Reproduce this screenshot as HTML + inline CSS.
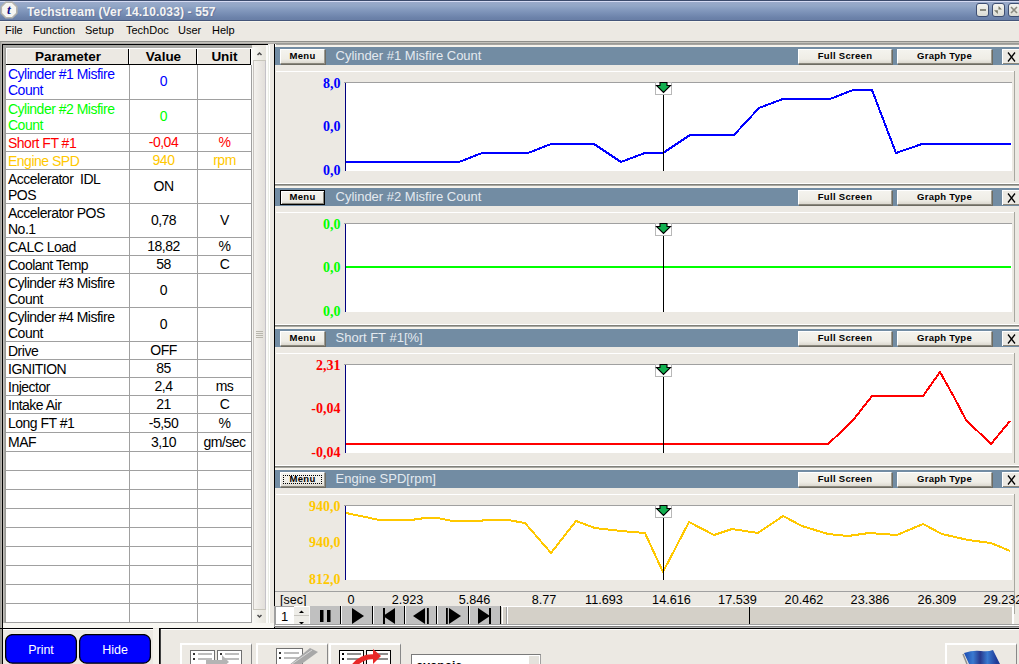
<!DOCTYPE html><html><head><meta charset="utf-8"><style>
html,body{margin:0;padding:0;}
body{width:1019px;height:664px;position:relative;overflow:hidden;background:#ECE9E3;font-family:"Liberation Sans",sans-serif;}
div{position:absolute;box-sizing:border-box;}
.t{white-space:pre;line-height:1;}
</style></head><body>
<div style="left:0;top:0;width:1019px;height:21px;background:linear-gradient(#3b4a6b 0px,#3b4a6b 1px,#d5dbf3 1px,#d5dbf3 2px,#9aaaca 2px,#92a6c6 6px,#8a9fc2 8px,#7a90b6 13px,#6b81a9 18px,#6a7fa6 20px,#44557a 20px,#44557a 21px)"></div>
<svg style="position:absolute;left:0;top:0" width="20" height="20" viewBox="0 0 20 20"><polygon points="5.8,2.3 12.2,2.3 16.8,6.8 16.8,13.2 12.2,17.7 5.8,17.7 1.3,13.2 1.3,6.8" fill="#f6f6f2" stroke="#b4b4ae" stroke-width="1.6"/><text x="9" y="14.3" font-family="Liberation Serif" font-style="italic" font-weight="bold" font-size="13.5" fill="#10108a" text-anchor="middle">t</text></svg>
<div class="t" style="left:27px;top:5.5px;font-weight:bold;font-size:12px;letter-spacing:0.15px;color:#f4f4f4;text-shadow:1px 1px 0 #6a7aa0;">Techstream (Ver 14.10.033) - 557</div>
<div style="left:976px;top:3px;width:13px;height:14px;background:linear-gradient(#f4f4f0,#dcdcd4);border:1px solid #3e4e72;border-radius:3px;"></div>
<div style="left:992px;top:3px;width:13px;height:14px;background:linear-gradient(#f4f4f0,#dcdcd4);border:1px solid #3e4e72;border-radius:3px;"></div>
<div style="left:1008px;top:3px;width:13px;height:14px;background:linear-gradient(#f4f4f0,#dcdcd4);border:1px solid #3e4e72;border-radius:3px;"></div>
<div style="left:980px;top:9px;width:6px;height:2px;background:#8a8a80;"></div>
<svg style="position:absolute;left:992px;top:3px" width="13" height="14"><polygon points="6.6,3 9.9,6.6 6.4,6.6" fill="#7a7a6a"/><polygon points="2,7.3 5.9,7.3 5.9,10.9" fill="#7a7a6a"/></svg>
<svg style="position:absolute;left:1008px;top:3px" width="11" height="14"><path d="M3,4 L9,10 M9,4 L3,10" stroke="#8a8a80" stroke-width="1.6"/></svg>
<div style="left:0px;top:21px;width:1019px;height:1px;background:#f8f6ee;"></div>
<div class="t" style="left:5px;top:25px;font-size:11px;color:#000;">File</div>
<div class="t" style="left:33px;top:25px;font-size:11px;color:#000;">Function</div>
<div class="t" style="left:85px;top:25px;font-size:11px;color:#000;">Setup</div>
<div class="t" style="left:126px;top:25px;font-size:11px;color:#000;">TechDoc</div>
<div class="t" style="left:178px;top:25px;font-size:11px;color:#000;">User</div>
<div class="t" style="left:212px;top:25px;font-size:11px;color:#000;">Help</div>
<div style="left:0px;top:41px;width:1019px;height:1px;background:#8e8e8a;"></div>
<div style="left:0px;top:42px;width:1019px;height:1px;background:#c4c2bc;"></div>
<div style="left:0px;top:43px;width:275px;height:1px;background:#b0aeaa;"></div>
<div style="left:275px;top:43px;width:744px;height:1px;background:#9a9a96;"></div>
<div style="left:275px;top:44px;width:744px;height:1px;background:#a8a6a2;"></div>
<div style="left:275px;top:45px;width:744px;height:2px;background:#f6f3ec;"></div>
<div style="left:0px;top:42px;width:1px;height:586px;background:#a0a09c;"></div>
<div style="left:1px;top:42px;width:1px;height:586px;background:#b8b4ae;"></div>
<div style="left:2px;top:44px;width:1px;height:584px;background:#000;"></div>
<div style="left:2px;top:44px;width:266px;height:1px;background:#000;"></div>
<div style="left:3px;top:45px;width:1px;height:578px;background:#c0bcb8;"></div>
<div style="left:4px;top:45px;width:1px;height:578px;background:#a8a8a4;"></div>
<div style="left:5px;top:45px;width:1px;height:578px;background:#9a9a96;"></div>
<div style="left:3px;top:45px;width:265px;height:3px;background:#a8a8a4;"></div>
<div style="left:6px;top:48px;width:246px;height:575px;background:#fff;"></div>
<div style="left:7px;top:49px;width:122px;height:15px;background:#ECE9E3;"></div>
<div style="left:6px;top:48px;width:123px;height:1px;background:#fff;"></div>
<div style="left:128px;top:49px;width:1px;height:16px;background:#000;"></div>
<div class="t" style="left:7px;top:50px;width:122px;text-align:center;font-weight:bold;font-size:13.5px;color:#000;">Parameter</div>
<div style="left:130px;top:49px;width:67px;height:15px;background:#ECE9E3;"></div>
<div style="left:129px;top:48px;width:68px;height:1px;background:#fff;"></div>
<div style="left:196px;top:49px;width:1px;height:16px;background:#000;"></div>
<div class="t" style="left:130px;top:50px;width:67px;text-align:center;font-weight:bold;font-size:13.5px;color:#000;">Value</div>
<div style="left:198px;top:49px;width:53px;height:15px;background:#ECE9E3;"></div>
<div style="left:197px;top:48px;width:54px;height:1px;background:#fff;"></div>
<div style="left:250px;top:49px;width:1px;height:16px;background:#000;"></div>
<div class="t" style="left:198px;top:50px;width:53px;text-align:center;font-weight:bold;font-size:13.5px;color:#000;">Unit</div>
<div style="left:6px;top:64px;width:245px;height:1px;background:#000;"></div>
<div style="left:6px;top:48px;width:1px;height:16px;background:#fff;"></div>
<div style="left:6px;top:99px;width:245px;height:1px;background:#a0a0a0;"></div>
<div style="left:6px;top:133px;width:245px;height:1px;background:#a0a0a0;"></div>
<div style="left:6px;top:151px;width:245px;height:1px;background:#a0a0a0;"></div>
<div style="left:6px;top:169px;width:245px;height:1px;background:#a0a0a0;"></div>
<div style="left:6px;top:203px;width:245px;height:1px;background:#a0a0a0;"></div>
<div style="left:6px;top:237px;width:245px;height:1px;background:#a0a0a0;"></div>
<div style="left:6px;top:255px;width:245px;height:1px;background:#a0a0a0;"></div>
<div style="left:6px;top:273px;width:245px;height:1px;background:#a0a0a0;"></div>
<div style="left:6px;top:307px;width:245px;height:1px;background:#a0a0a0;"></div>
<div style="left:6px;top:341px;width:245px;height:1px;background:#a0a0a0;"></div>
<div style="left:6px;top:359px;width:245px;height:1px;background:#a0a0a0;"></div>
<div style="left:6px;top:377px;width:245px;height:1px;background:#a0a0a0;"></div>
<div style="left:6px;top:395px;width:245px;height:1px;background:#a0a0a0;"></div>
<div style="left:6px;top:413px;width:245px;height:1px;background:#a0a0a0;"></div>
<div style="left:6px;top:432px;width:245px;height:1px;background:#a0a0a0;"></div>
<div style="left:6px;top:451px;width:245px;height:1px;background:#a0a0a0;"></div>
<div style="left:6px;top:470px;width:245px;height:1px;background:#a0a0a0;"></div>
<div style="left:6px;top:489px;width:245px;height:1px;background:#a0a0a0;"></div>
<div style="left:6px;top:508px;width:245px;height:1px;background:#a0a0a0;"></div>
<div style="left:6px;top:527px;width:245px;height:1px;background:#a0a0a0;"></div>
<div style="left:6px;top:546px;width:245px;height:1px;background:#a0a0a0;"></div>
<div style="left:6px;top:565px;width:245px;height:1px;background:#a0a0a0;"></div>
<div style="left:6px;top:584px;width:245px;height:1px;background:#a0a0a0;"></div>
<div style="left:6px;top:603px;width:245px;height:1px;background:#a0a0a0;"></div>
<div style="left:6px;top:622px;width:245px;height:1px;background:#a0a0a0;"></div>
<div style="left:129px;top:65px;width:1px;height:558px;background:#a0a0a0;"></div>
<div style="left:197px;top:65px;width:1px;height:558px;background:#a0a0a0;"></div>
<div style="left:251px;top:65px;width:1px;height:558px;background:#a0a0a0;"></div>
<div class="t" style="left:8px;top:67.0px;font-size:14px;letter-spacing:-0.5px;color:#0000ff;">Cylinder #1 Misfire</div>
<div class="t" style="left:8px;top:83.0px;font-size:14px;letter-spacing:-0.5px;color:#0000ff;">Count</div>
<div class="t" style="left:130px;top:74.0px;width:67px;text-align:center;font-size:14px;letter-spacing:-0.5px;color:#0000ff;">0</div>
<div class="t" style="left:198px;top:74.0px;width:53px;text-align:center;font-size:14px;letter-spacing:-0.5px;color:#0000ff;"></div>
<div class="t" style="left:8px;top:101.5px;font-size:14px;letter-spacing:-0.5px;color:#00ff00;">Cylinder #2 Misfire</div>
<div class="t" style="left:8px;top:117.5px;font-size:14px;letter-spacing:-0.5px;color:#00ff00;">Count</div>
<div class="t" style="left:130px;top:108.5px;width:67px;text-align:center;font-size:14px;letter-spacing:-0.5px;color:#00ff00;">0</div>
<div class="t" style="left:198px;top:108.5px;width:53px;text-align:center;font-size:14px;letter-spacing:-0.5px;color:#00ff00;"></div>
<div class="t" style="left:8px;top:135.5px;font-size:14px;letter-spacing:-0.5px;color:#ff0000;">Short FT #1</div>
<div class="t" style="left:130px;top:135.0px;width:67px;text-align:center;font-size:14px;letter-spacing:-0.5px;color:#ff0000;">-0,04</div>
<div class="t" style="left:198px;top:135.0px;width:53px;text-align:center;font-size:14px;letter-spacing:-0.5px;color:#ff0000;">%</div>
<div class="t" style="left:8px;top:153.5px;font-size:14px;letter-spacing:-0.5px;color:#ffc800;">Engine SPD</div>
<div class="t" style="left:130px;top:153.0px;width:67px;text-align:center;font-size:14px;letter-spacing:-0.5px;color:#ffc800;">940</div>
<div class="t" style="left:198px;top:153.0px;width:53px;text-align:center;font-size:14px;letter-spacing:-0.5px;color:#ffc800;">rpm</div>
<div class="t" style="left:8px;top:171.5px;font-size:14px;letter-spacing:-0.5px;color:#000000;">Accelerator  IDL</div>
<div class="t" style="left:8px;top:187.5px;font-size:14px;letter-spacing:-0.5px;color:#000000;">POS</div>
<div class="t" style="left:130px;top:178.5px;width:67px;text-align:center;font-size:14px;letter-spacing:-0.5px;color:#000000;">ON</div>
<div class="t" style="left:198px;top:178.5px;width:53px;text-align:center;font-size:14px;letter-spacing:-0.5px;color:#000000;"></div>
<div class="t" style="left:8px;top:205.5px;font-size:14px;letter-spacing:-0.5px;color:#000000;">Accelerator POS</div>
<div class="t" style="left:8px;top:221.5px;font-size:14px;letter-spacing:-0.5px;color:#000000;">No.1</div>
<div class="t" style="left:130px;top:212.5px;width:67px;text-align:center;font-size:14px;letter-spacing:-0.5px;color:#000000;">0,78</div>
<div class="t" style="left:198px;top:212.5px;width:53px;text-align:center;font-size:14px;letter-spacing:-0.5px;color:#000000;">V</div>
<div class="t" style="left:8px;top:239.5px;font-size:14px;letter-spacing:-0.5px;color:#000000;">CALC Load</div>
<div class="t" style="left:130px;top:239.0px;width:67px;text-align:center;font-size:14px;letter-spacing:-0.5px;color:#000000;">18,82</div>
<div class="t" style="left:198px;top:239.0px;width:53px;text-align:center;font-size:14px;letter-spacing:-0.5px;color:#000000;">%</div>
<div class="t" style="left:8px;top:257.5px;font-size:14px;letter-spacing:-0.5px;color:#000000;">Coolant Temp</div>
<div class="t" style="left:130px;top:257.0px;width:67px;text-align:center;font-size:14px;letter-spacing:-0.5px;color:#000000;">58</div>
<div class="t" style="left:198px;top:257.0px;width:53px;text-align:center;font-size:14px;letter-spacing:-0.5px;color:#000000;">C</div>
<div class="t" style="left:8px;top:275.5px;font-size:14px;letter-spacing:-0.5px;color:#000000;">Cylinder #3 Misfire</div>
<div class="t" style="left:8px;top:291.5px;font-size:14px;letter-spacing:-0.5px;color:#000000;">Count</div>
<div class="t" style="left:130px;top:282.5px;width:67px;text-align:center;font-size:14px;letter-spacing:-0.5px;color:#000000;">0</div>
<div class="t" style="left:198px;top:282.5px;width:53px;text-align:center;font-size:14px;letter-spacing:-0.5px;color:#000000;"></div>
<div class="t" style="left:8px;top:309.5px;font-size:14px;letter-spacing:-0.5px;color:#000000;">Cylinder #4 Misfire</div>
<div class="t" style="left:8px;top:325.5px;font-size:14px;letter-spacing:-0.5px;color:#000000;">Count</div>
<div class="t" style="left:130px;top:316.5px;width:67px;text-align:center;font-size:14px;letter-spacing:-0.5px;color:#000000;">0</div>
<div class="t" style="left:198px;top:316.5px;width:53px;text-align:center;font-size:14px;letter-spacing:-0.5px;color:#000000;"></div>
<div class="t" style="left:8px;top:343.5px;font-size:14px;letter-spacing:-0.5px;color:#000000;">Drive</div>
<div class="t" style="left:130px;top:343.0px;width:67px;text-align:center;font-size:14px;letter-spacing:-0.5px;color:#000000;">OFF</div>
<div class="t" style="left:198px;top:343.0px;width:53px;text-align:center;font-size:14px;letter-spacing:-0.5px;color:#000000;"></div>
<div class="t" style="left:8px;top:361.5px;font-size:14px;letter-spacing:-0.5px;color:#000000;">IGNITION</div>
<div class="t" style="left:130px;top:361.0px;width:67px;text-align:center;font-size:14px;letter-spacing:-0.5px;color:#000000;">85</div>
<div class="t" style="left:198px;top:361.0px;width:53px;text-align:center;font-size:14px;letter-spacing:-0.5px;color:#000000;"></div>
<div class="t" style="left:8px;top:379.5px;font-size:14px;letter-spacing:-0.5px;color:#000000;">Injector</div>
<div class="t" style="left:130px;top:379.0px;width:67px;text-align:center;font-size:14px;letter-spacing:-0.5px;color:#000000;">2,4</div>
<div class="t" style="left:198px;top:379.0px;width:53px;text-align:center;font-size:14px;letter-spacing:-0.5px;color:#000000;">ms</div>
<div class="t" style="left:8px;top:397.5px;font-size:14px;letter-spacing:-0.5px;color:#000000;">Intake Air</div>
<div class="t" style="left:130px;top:397.0px;width:67px;text-align:center;font-size:14px;letter-spacing:-0.5px;color:#000000;">21</div>
<div class="t" style="left:198px;top:397.0px;width:53px;text-align:center;font-size:14px;letter-spacing:-0.5px;color:#000000;">C</div>
<div class="t" style="left:8px;top:416.0px;font-size:14px;letter-spacing:-0.5px;color:#000000;">Long FT #1</div>
<div class="t" style="left:130px;top:415.5px;width:67px;text-align:center;font-size:14px;letter-spacing:-0.5px;color:#000000;">-5,50</div>
<div class="t" style="left:198px;top:415.5px;width:53px;text-align:center;font-size:14px;letter-spacing:-0.5px;color:#000000;">%</div>
<div class="t" style="left:8px;top:435.0px;font-size:14px;letter-spacing:-0.5px;color:#000000;">MAF</div>
<div class="t" style="left:130px;top:434.5px;width:67px;text-align:center;font-size:14px;letter-spacing:-0.5px;color:#000000;">3,10</div>
<div class="t" style="left:198px;top:434.5px;width:53px;text-align:center;font-size:14px;letter-spacing:-0.5px;color:#000000;">gm/sec</div>
<div style="left:252px;top:45px;width:22px;height:583px;background:#ECE9E3;"></div>
<div style="left:252px;top:48px;width:1px;height:575px;background:#f8f8f4;"></div>
<div style="left:253px;top:48px;width:1px;height:575px;background:#c8c4c0;"></div>
<div style="left:254px;top:48px;width:11px;height:575px;background:linear-gradient(90deg,#f4f2ee,#e2dfda);"></div>
<div style="left:265px;top:48px;width:1px;height:575px;background:#c4c2c8;"></div>
<div style="left:266px;top:45px;width:2px;height:583px;background:#fcfcfa;"></div>
<div style="left:268px;top:45px;width:1px;height:583px;background:#e8ebe4;"></div>
<div style="left:269px;top:45px;width:1px;height:583px;background:#fff;"></div>
<div style="left:253px;top:47px;width:13px;height:14px;background:linear-gradient(90deg,#f8f8f4,#e6e4dc);border-bottom:1px solid #c8c6bc;"></div>
<svg style="position:absolute;left:253px;top:49px" width="13" height="10"><path d="M4.5,6 L6.5,4 L8.5,6" stroke="#4d4d4d" stroke-width="1.5" fill="none"/></svg>
<div style="left:253px;top:609px;width:13px;height:14px;background:linear-gradient(90deg,#f8f8f4,#e6e4dc);border-top:1px solid #c8c6bc;"></div>
<svg style="position:absolute;left:253px;top:611px" width="13" height="10"><path d="M4.5,4 L6.5,6 L8.5,4" stroke="#4d4d4d" stroke-width="1.5" fill="none"/></svg>
<div style="left:256px;top:331px;width:7px;height:1px;background:#b8b6ac;"></div>
<div style="left:256px;top:333px;width:7px;height:1px;background:#b8b6ac;"></div>
<div style="left:256px;top:335px;width:7px;height:1px;background:#b8b6ac;"></div>
<div style="left:256px;top:337px;width:7px;height:1px;background:#b8b6ac;"></div>
<div style="left:274px;top:44px;width:1px;height:584px;background:#000;"></div>
<div style="left:275px;top:44px;width:1px;height:3px;background:#fff;"></div>
<div style="left:275px;top:47px;width:744px;height:18px;background:#728ca3;"></div>
<div style="left:280px;top:49px;width:45px;height:15px;background:linear-gradient(#f4f3ee 0%,#efede6 70%,#dcd9d0 100%);border-top:1px solid #fff;border-left:1px solid #fff;border-right:1px solid #9d9a90;border-bottom:1px solid #8a877c;box-shadow:1px 1px 0 #6d6b62;"></div>
<div class="t" style="left:280px;top:51px;width:45px;text-align:center;font-size:9.5px;letter-spacing:0.3px;color:#000;font-weight:bold;">Menu</div>
<div class="t" style="left:335.5px;top:49px;font-size:13px;color:#e4eaf0;">Cylinder #1 Misfire Count</div>
<div style="left:798px;top:49px;width:94px;height:15px;background:linear-gradient(#f4f3ee 0%,#efede6 70%,#dcd9d0 100%);border-top:1px solid #fff;border-left:1px solid #fff;border-right:1px solid #9d9a90;border-bottom:1px solid #8a877c;box-shadow:1px 1px 0 #6d6b62;"></div>
<div class="t" style="left:798px;top:51px;width:94px;text-align:center;font-size:9.5px;letter-spacing:0.3px;color:#000;font-weight:bold;">Full Screen</div>
<div style="left:897px;top:49px;width:95px;height:15px;background:linear-gradient(#f4f3ee 0%,#efede6 70%,#dcd9d0 100%);border-top:1px solid #fff;border-left:1px solid #fff;border-right:1px solid #9d9a90;border-bottom:1px solid #8a877c;box-shadow:1px 1px 0 #6d6b62;"></div>
<div class="t" style="left:897px;top:51px;width:95px;text-align:center;font-size:9.5px;letter-spacing:0.3px;color:#000;font-weight:bold;">Graph Type</div>
<div style="left:1002px;top:49px;width:17px;height:15px;background:#ECE9E3;border-top:1px solid #fff;border-left:1px solid #fff;"></div>
<div style="left:1003px;top:63px;width:16px;height:1px;background:#8a877c;"></div>
<svg style="position:absolute;left:1003px;top:47px" width="16" height="18"><path d="M5,5.5 L12,14.5 M12,5.5 L5,14.5" stroke="#000" stroke-width="1.25"/></svg>
<div style="left:275px;top:71px;width:1px;height:1px;"></div>
<div style="left:276px;top:71px;width:738px;height:1px;background:#fff;"></div>
<div style="left:1014px;top:71px;width:1px;height:110px;background:#a8a8a0;"></div>
<div style="left:344px;top:82px;width:668px;height:1px;background:#a0a0a0;"></div>
<div style="left:346px;top:83px;width:666px;height:88px;background:#fff;"></div>
<div style="left:345px;top:83px;width:1px;height:88px;background:#000080;"></div>
<div class="t" style="left:240.5px;top:76.8px;width:100px;text-align:right;font-family:'Liberation Serif',serif;font-weight:bold;font-size:14px;color:#0000ff;">8,0</div>
<div class="t" style="left:240.5px;top:120.35px;width:100px;text-align:right;font-family:'Liberation Serif',serif;font-weight:bold;font-size:14px;color:#0000ff;">0,0</div>
<div class="t" style="left:240.5px;top:163.9px;width:100px;text-align:right;font-family:'Liberation Serif',serif;font-weight:bold;font-size:14px;color:#0000ff;">0,0</div>
<div style="left:275px;top:183px;width:744px;height:1px;background:#fff;"></div>
<div style="left:275px;top:184px;width:744px;height:1px;background:#80807a;"></div>
<div style="left:275px;top:185px;width:744px;height:1px;background:#a8a8a2;"></div>
<div style="left:275px;top:186px;width:744px;height:2px;background:#f6f3ec;"></div>
<div style="left:275px;top:188px;width:744px;height:18px;background:#728ca3;"></div>
<div style="left:280px;top:190px;width:45px;height:15px;background:linear-gradient(#f4f3ee 0%,#efede6 70%,#dcd9d0 100%);border:1px solid #000;box-shadow:inset 1px 1px 0 #fff, inset -1px -1px 0 #8a877c;"></div>
<div class="t" style="left:280px;top:192px;width:45px;text-align:center;font-size:9.5px;letter-spacing:0.3px;color:#000;font-weight:bold;">Menu</div>
<div class="t" style="left:335.5px;top:190px;font-size:13px;color:#e4eaf0;">Cylinder #2 Misfire Count</div>
<div style="left:798px;top:190px;width:94px;height:15px;background:linear-gradient(#f4f3ee 0%,#efede6 70%,#dcd9d0 100%);border-top:1px solid #fff;border-left:1px solid #fff;border-right:1px solid #9d9a90;border-bottom:1px solid #8a877c;box-shadow:1px 1px 0 #6d6b62;"></div>
<div class="t" style="left:798px;top:192px;width:94px;text-align:center;font-size:9.5px;letter-spacing:0.3px;color:#000;font-weight:bold;">Full Screen</div>
<div style="left:897px;top:190px;width:95px;height:15px;background:linear-gradient(#f4f3ee 0%,#efede6 70%,#dcd9d0 100%);border-top:1px solid #fff;border-left:1px solid #fff;border-right:1px solid #9d9a90;border-bottom:1px solid #8a877c;box-shadow:1px 1px 0 #6d6b62;"></div>
<div class="t" style="left:897px;top:192px;width:95px;text-align:center;font-size:9.5px;letter-spacing:0.3px;color:#000;font-weight:bold;">Graph Type</div>
<div style="left:1002px;top:190px;width:17px;height:15px;background:#ECE9E3;border-top:1px solid #fff;border-left:1px solid #fff;"></div>
<div style="left:1003px;top:204px;width:16px;height:1px;background:#8a877c;"></div>
<svg style="position:absolute;left:1003px;top:188px" width="16" height="18"><path d="M5,5.5 L12,14.5 M12,5.5 L5,14.5" stroke="#000" stroke-width="1.25"/></svg>
<div style="left:275px;top:212px;width:1px;height:1px;"></div>
<div style="left:276px;top:212px;width:738px;height:1px;background:#fff;"></div>
<div style="left:1014px;top:212px;width:1px;height:110px;background:#a8a8a0;"></div>
<div style="left:344px;top:223px;width:668px;height:1px;background:#a0a0a0;"></div>
<div style="left:346px;top:224px;width:666px;height:88px;background:#fff;"></div>
<div style="left:345px;top:224px;width:1px;height:88px;background:#000080;"></div>
<div class="t" style="left:240.5px;top:217.8px;width:100px;text-align:right;font-family:'Liberation Serif',serif;font-weight:bold;font-size:14px;color:#00ff00;">0,0</div>
<div class="t" style="left:240.5px;top:261.35px;width:100px;text-align:right;font-family:'Liberation Serif',serif;font-weight:bold;font-size:14px;color:#00ff00;">0,0</div>
<div class="t" style="left:240.5px;top:304.90000000000003px;width:100px;text-align:right;font-family:'Liberation Serif',serif;font-weight:bold;font-size:14px;color:#00ff00;">0,0</div>
<div style="left:275px;top:324px;width:744px;height:1px;background:#fff;"></div>
<div style="left:275px;top:325px;width:744px;height:1px;background:#80807a;"></div>
<div style="left:275px;top:326px;width:744px;height:1px;background:#a8a8a2;"></div>
<div style="left:275px;top:327px;width:744px;height:2px;background:#f6f3ec;"></div>
<div style="left:275px;top:329px;width:744px;height:18px;background:#728ca3;"></div>
<div style="left:280px;top:331px;width:45px;height:15px;background:linear-gradient(#f4f3ee 0%,#efede6 70%,#dcd9d0 100%);border-top:1px solid #fff;border-left:1px solid #fff;border-right:1px solid #9d9a90;border-bottom:1px solid #8a877c;box-shadow:1px 1px 0 #6d6b62;"></div>
<div class="t" style="left:280px;top:333px;width:45px;text-align:center;font-size:9.5px;letter-spacing:0.3px;color:#000;font-weight:bold;">Menu</div>
<div class="t" style="left:335.5px;top:331px;font-size:13px;color:#e4eaf0;">Short FT #1[%]</div>
<div style="left:798px;top:331px;width:94px;height:15px;background:linear-gradient(#f4f3ee 0%,#efede6 70%,#dcd9d0 100%);border-top:1px solid #fff;border-left:1px solid #fff;border-right:1px solid #9d9a90;border-bottom:1px solid #8a877c;box-shadow:1px 1px 0 #6d6b62;"></div>
<div class="t" style="left:798px;top:333px;width:94px;text-align:center;font-size:9.5px;letter-spacing:0.3px;color:#000;font-weight:bold;">Full Screen</div>
<div style="left:897px;top:331px;width:95px;height:15px;background:linear-gradient(#f4f3ee 0%,#efede6 70%,#dcd9d0 100%);border-top:1px solid #fff;border-left:1px solid #fff;border-right:1px solid #9d9a90;border-bottom:1px solid #8a877c;box-shadow:1px 1px 0 #6d6b62;"></div>
<div class="t" style="left:897px;top:333px;width:95px;text-align:center;font-size:9.5px;letter-spacing:0.3px;color:#000;font-weight:bold;">Graph Type</div>
<div style="left:1002px;top:331px;width:17px;height:15px;background:#ECE9E3;border-top:1px solid #fff;border-left:1px solid #fff;"></div>
<div style="left:1003px;top:345px;width:16px;height:1px;background:#8a877c;"></div>
<svg style="position:absolute;left:1003px;top:329px" width="16" height="18"><path d="M5,5.5 L12,14.5 M12,5.5 L5,14.5" stroke="#000" stroke-width="1.25"/></svg>
<div style="left:275px;top:353px;width:1px;height:1px;"></div>
<div style="left:276px;top:353px;width:738px;height:1px;background:#fff;"></div>
<div style="left:1014px;top:353px;width:1px;height:110px;background:#a8a8a0;"></div>
<div style="left:344px;top:364px;width:668px;height:1px;background:#a0a0a0;"></div>
<div style="left:346px;top:365px;width:666px;height:88px;background:#fff;"></div>
<div style="left:345px;top:365px;width:1px;height:88px;background:#000080;"></div>
<div class="t" style="left:240.5px;top:358.8px;width:100px;text-align:right;font-family:'Liberation Serif',serif;font-weight:bold;font-size:14px;color:#ff0000;">2,31</div>
<div class="t" style="left:240.5px;top:402.35px;width:100px;text-align:right;font-family:'Liberation Serif',serif;font-weight:bold;font-size:14px;color:#ff0000;">-0,04</div>
<div class="t" style="left:240.5px;top:445.90000000000003px;width:100px;text-align:right;font-family:'Liberation Serif',serif;font-weight:bold;font-size:14px;color:#ff0000;">-0,04</div>
<div style="left:275px;top:465px;width:744px;height:1px;background:#fff;"></div>
<div style="left:275px;top:466px;width:744px;height:1px;background:#80807a;"></div>
<div style="left:275px;top:467px;width:744px;height:1px;background:#a8a8a2;"></div>
<div style="left:275px;top:468px;width:744px;height:2px;background:#f6f3ec;"></div>
<div style="left:275px;top:470px;width:744px;height:18px;background:#728ca3;"></div>
<div style="left:280px;top:472px;width:45px;height:15px;background:linear-gradient(#f4f3ee 0%,#efede6 70%,#dcd9d0 100%);border-top:1px solid #fff;border-left:1px solid #fff;border-right:1px solid #9d9a90;border-bottom:1px solid #8a877c;box-shadow:1px 1px 0 #6d6b62;"></div>
<div style="left:283px;top:475px;width:39px;height:9px;border:1px dotted #000;"></div>
<div class="t" style="left:280px;top:474px;width:45px;text-align:center;font-size:9.5px;letter-spacing:0.3px;color:#000;font-weight:bold;">Menu</div>
<div class="t" style="left:335.5px;top:472px;font-size:13px;color:#e4eaf0;">Engine SPD[rpm]</div>
<div style="left:798px;top:472px;width:94px;height:15px;background:linear-gradient(#f4f3ee 0%,#efede6 70%,#dcd9d0 100%);border-top:1px solid #fff;border-left:1px solid #fff;border-right:1px solid #9d9a90;border-bottom:1px solid #8a877c;box-shadow:1px 1px 0 #6d6b62;"></div>
<div class="t" style="left:798px;top:474px;width:94px;text-align:center;font-size:9.5px;letter-spacing:0.3px;color:#000;font-weight:bold;">Full Screen</div>
<div style="left:897px;top:472px;width:95px;height:15px;background:linear-gradient(#f4f3ee 0%,#efede6 70%,#dcd9d0 100%);border-top:1px solid #fff;border-left:1px solid #fff;border-right:1px solid #9d9a90;border-bottom:1px solid #8a877c;box-shadow:1px 1px 0 #6d6b62;"></div>
<div class="t" style="left:897px;top:474px;width:95px;text-align:center;font-size:9.5px;letter-spacing:0.3px;color:#000;font-weight:bold;">Graph Type</div>
<div style="left:1002px;top:472px;width:17px;height:15px;background:#ECE9E3;border-top:1px solid #fff;border-left:1px solid #fff;"></div>
<div style="left:1003px;top:486px;width:16px;height:1px;background:#8a877c;"></div>
<svg style="position:absolute;left:1003px;top:470px" width="16" height="18"><path d="M5,5.5 L12,14.5 M12,5.5 L5,14.5" stroke="#000" stroke-width="1.25"/></svg>
<div style="left:275px;top:494px;width:1px;height:1px;"></div>
<div style="left:276px;top:494px;width:738px;height:1px;background:#fff;"></div>
<div style="left:1014px;top:494px;width:1px;height:120px;background:#a8a8a0;"></div>
<div style="left:344px;top:505px;width:668px;height:1px;background:#a0a0a0;"></div>
<div style="left:346px;top:506px;width:666px;height:74px;background:#fff;"></div>
<div style="left:345px;top:506px;width:1px;height:74px;background:#000080;"></div>
<div class="t" style="left:240.5px;top:499.8px;width:100px;text-align:right;font-family:'Liberation Serif',serif;font-weight:bold;font-size:14px;color:#ffc800;">940,0</div>
<div class="t" style="left:240.5px;top:536.3499999999999px;width:100px;text-align:right;font-family:'Liberation Serif',serif;font-weight:bold;font-size:14px;color:#ffc800;">940,0</div>
<div class="t" style="left:240.5px;top:572.9px;width:100px;text-align:right;font-family:'Liberation Serif',serif;font-weight:bold;font-size:14px;color:#ffc800;">812,0</div>
<svg style="position:absolute;left:0;top:0" width="1019" height="664"><polyline points="346,162 459,162 482,153 528,153 551,144 594,144 621,162 645,153 663,153 690,135 734,135 759,108 783,99 830,99 853,90 872,90 896,153 922,144 1011,144" fill="none" stroke="#0000ff" stroke-width="2" stroke-linejoin="miter" shape-rendering="crispEdges"/><line x1="663.5" y1="95" x2="663.5" y2="171" stroke="#000" stroke-width="1"/><rect x="655.5" y="82.5" width="16" height="12" fill="#fff" stroke="#b8b8b8" stroke-width="1"/><polygon points="660,82.5 667,82.5 667,85.5 670.5,85.5 663.5,92.5 656.5,85.5 660,85.5" fill="#12b050" stroke="#000" stroke-width="1.1" stroke-linejoin="miter"/><polyline points="346,267 1011,267" fill="none" stroke="#00ff00" stroke-width="2" stroke-linejoin="miter" shape-rendering="crispEdges"/><line x1="663.5" y1="236" x2="663.5" y2="312" stroke="#000" stroke-width="1"/><rect x="655.5" y="223.5" width="16" height="12" fill="#fff" stroke="#b8b8b8" stroke-width="1"/><polygon points="660,223.5 667,223.5 667,226.5 670.5,226.5 663.5,233.5 656.5,226.5 660,226.5" fill="#12b050" stroke="#000" stroke-width="1.1" stroke-linejoin="miter"/><polyline points="346,444 828,444 841,432 854,419 872,396 923,396 940,372 954,397 966,420 991,444 1010,421" fill="none" stroke="#ff0000" stroke-width="2" stroke-linejoin="miter" shape-rendering="crispEdges"/><line x1="663.5" y1="377" x2="663.5" y2="453" stroke="#000" stroke-width="1"/><rect x="655.5" y="364.5" width="16" height="12" fill="#fff" stroke="#b8b8b8" stroke-width="1"/><polygon points="660,364.5 667,364.5 667,367.5 670.5,367.5 663.5,374.5 656.5,367.5 660,367.5" fill="#12b050" stroke="#000" stroke-width="1.1" stroke-linejoin="miter"/><polyline points="346,513 370,518 379,520 411,520 425,518 438,518 452,521 481,521 484,520 508,520 525,523 551,553 576,521 595,528 621,531 645,533 663,572 689,522 714,535 732,529 758,533 783,516 802,526 828,534 848,536 869,533 897,535 923,524 942,534 968,540 991,543 1010,551" fill="none" stroke="#ffc800" stroke-width="2" stroke-linejoin="miter" shape-rendering="crispEdges"/><line x1="663.5" y1="518" x2="663.5" y2="580" stroke="#000" stroke-width="1"/><rect x="655.5" y="505.5" width="16" height="12" fill="#fff" stroke="#b8b8b8" stroke-width="1"/><polygon points="660,505.5 667,505.5 667,508.5 670.5,508.5 663.5,515.5 656.5,508.5 660,508.5" fill="#12b050" stroke="#000" stroke-width="1.1" stroke-linejoin="miter"/></svg>
<div style="left:275px;top:591px;width:739px;height:1px;background:#a0a0a0;"></div>
<div class="t" style="left:280px;top:594px;font-size:12.5px;color:#000;">[sec]</div>
<div class="t" style="left:321px;top:594px;width:60px;text-align:center;font-size:12.7px;color:#000;">0</div>
<div class="t" style="left:377.5px;top:594px;width:60px;text-align:center;font-size:12.7px;color:#000;">2.923</div>
<div class="t" style="left:444.5px;top:594px;width:60px;text-align:center;font-size:12.7px;color:#000;">5.846</div>
<div class="t" style="left:514px;top:594px;width:60px;text-align:center;font-size:12.7px;color:#000;">8.77</div>
<div class="t" style="left:574px;top:594px;width:60px;text-align:center;font-size:12.7px;color:#000;">11.693</div>
<div class="t" style="left:641.5px;top:594px;width:60px;text-align:center;font-size:12.7px;color:#000;">14.616</div>
<div class="t" style="left:707.5px;top:594px;width:60px;text-align:center;font-size:12.7px;color:#000;">17.539</div>
<div class="t" style="left:774px;top:594px;width:60px;text-align:center;font-size:12.7px;color:#000;">20.462</div>
<div class="t" style="left:840px;top:594px;width:60px;text-align:center;font-size:12.7px;color:#000;">23.386</div>
<div class="t" style="left:907px;top:594px;width:60px;text-align:center;font-size:12.7px;color:#000;">26.309</div>
<div class="t" style="left:973px;top:594px;width:60px;text-align:center;font-size:12.7px;color:#000;">29.232</div>
<div style="left:274px;top:606px;width:20px;height:21px;background:#fff;border-top:1px solid #a0a0a0;border-left:2px solid #a0a0a0;"></div>
<div class="t" style="left:281px;top:610px;font-size:13px;color:#000;">1</div>
<div style="left:294px;top:606px;width:15px;height:10px;background:#eeede8;border-top:1px solid #fff;border-bottom:1px solid #c8c6c0;"></div>
<div style="left:294px;top:616px;width:15px;height:11px;background:#eeede8;border-bottom:1px solid #c8c6c0;"></div>
<svg style="position:absolute;left:294px;top:606px" width="15" height="21"><path d="M5,7 L7.5,4.5 L10,7 Z" fill="#000"/><path d="M5,16 L10,16 L7.5,18.5 Z" fill="#000"/></svg>
<div style="left:309px;top:606px;width:32px;height:20px;background:#c0c0c0;border-left:1px solid #f8f8f8;border-right:1px solid #000;border-bottom:1px solid #000;"></div>
<svg style="position:absolute;left:309px;top:606px" width="32" height="20"><rect x="11" y="4" width="3.5" height="12" fill="#000"/><rect x="18" y="4" width="3.5" height="12" fill="#000"/></svg>
<div style="left:341px;top:606px;width:32px;height:20px;background:#c0c0c0;border-left:1px solid #f8f8f8;border-right:1px solid #000;border-bottom:1px solid #000;"></div>
<svg style="position:absolute;left:341px;top:606px" width="32" height="20"><polygon points="11,2 11,18 23,10" fill="#000"/></svg>
<div style="left:373px;top:606px;width:32px;height:20px;background:#c0c0c0;border-left:1px solid #f8f8f8;border-right:1px solid #000;border-bottom:1px solid #000;"></div>
<svg style="position:absolute;left:373px;top:606px" width="32" height="20"><rect x="10" y="2" width="2" height="16" fill="#000"/><polygon points="22,2 22,18 10,10" fill="#000"/></svg>
<div style="left:405px;top:606px;width:32px;height:20px;background:#c0c0c0;border-left:1px solid #f8f8f8;border-right:1px solid #000;border-bottom:1px solid #000;"></div>
<svg style="position:absolute;left:405px;top:606px" width="32" height="20"><polygon points="20,2 20,18 8,10" fill="#000"/><rect x="22" y="2" width="1.8" height="16" fill="#000"/></svg>
<div style="left:437px;top:606px;width:32px;height:20px;background:#c0c0c0;border-left:1px solid #f8f8f8;border-right:1px solid #000;border-bottom:1px solid #000;"></div>
<svg style="position:absolute;left:437px;top:606px" width="32" height="20"><rect x="9" y="2" width="1.8" height="16" fill="#000"/><polygon points="12,2 12,18 24,10" fill="#000"/></svg>
<div style="left:469px;top:606px;width:32px;height:20px;background:#c0c0c0;border-left:1px solid #f8f8f8;border-right:1px solid #000;border-bottom:1px solid #000;"></div>
<svg style="position:absolute;left:469px;top:606px" width="32" height="20"><polygon points="9,2 9,18 21,10" fill="#000"/><rect x="20" y="2" width="2" height="16" fill="#000"/></svg>
<div style="left:501px;top:606px;width:513px;height:21px;background:#d4d0c8;border-top:1px solid #fff;border-bottom:1px solid #808080;"></div>
<div style="left:502px;top:607px;width:1px;height:18px;background:#fff;"></div>
<div style="left:506px;top:607px;width:1px;height:18px;background:#a0a0a0;"></div>
<div style="left:507px;top:607px;width:1px;height:18px;background:#fff;"></div>
<div style="left:749px;top:607px;width:1px;height:19px;background:#000;"></div>
<div style="left:1012px;top:607px;width:2px;height:19px;background:#fff;"></div>
<div style="left:275px;top:624px;width:744px;height:1px;background:#a0a0a0;"></div>
<div style="left:275px;top:625px;width:744px;height:1px;background:#fff;"></div>
<div style="left:275px;top:626px;width:744px;height:1px;background:#808080;"></div>
<div style="left:275px;top:627px;width:744px;height:1px;background:#b0b0b0;"></div>
<div style="left:3px;top:623px;width:271px;height:5px;background:#f8f7f2;"></div>
<div style="left:0px;top:628px;width:153px;height:1px;background:#000;"></div>
<div style="left:159px;top:628px;width:860px;height:1px;background:#000;"></div>
<div style="left:0px;top:629px;width:1019px;height:35px;background:#ECE9E3;"></div>
<div style="left:153px;top:629px;width:6px;height:35px;background:#f4f2ec;"></div>
<div style="left:0px;top:629px;width:2px;height:35px;background:#9a9890;"></div>
<div style="left:2px;top:628px;width:1px;height:36px;background:#000;"></div>
<div style="left:159px;top:628px;width:1px;height:36px;background:#000;"></div>
<div style="left:160px;top:629px;width:1px;height:35px;background:#404040;"></div>
<div style="left:3px;top:629px;width:150px;height:1px;background:#fff;"></div>
<div style="left:161px;top:629px;width:858px;height:1px;background:#fff;"></div>
<svg style="position:absolute;left:5px;top:634px" width="72" height="32"><rect x="0.6" y="0.6" width="70.8" height="28.6" rx="7" ry="7" fill="#0000ff" stroke="#000" stroke-width="1.3"/></svg>
<div class="t" style="left:5px;top:643.5px;width:72px;text-align:center;font-size:12.5px;color:#fff;">Print</div>
<svg style="position:absolute;left:79px;top:634px" width="72" height="32"><rect x="0.6" y="0.6" width="70.8" height="28.6" rx="7" ry="7" fill="#0000ff" stroke="#000" stroke-width="1.3"/></svg>
<div class="t" style="left:79px;top:643.5px;width:72px;text-align:center;font-size:12.5px;color:#fff;">Hide</div>
<div style="left:180px;top:643px;width:72px;height:21px;border-top:2px solid #fff;border-left:2px solid #fff;border-right:1px solid #888;"></div>
<div style="left:256px;top:643px;width:72px;height:21px;border-top:2px solid #fff;border-left:2px solid #fff;border-right:1px solid #888;"></div>
<div style="left:329px;top:643px;width:72px;height:21px;border-top:2px solid #fff;border-left:2px solid #fff;border-right:1px solid #888;"></div>
<svg style="position:absolute;left:0;top:0" width="1019" height="664"><rect x="190.5" y="650.5" width="24" height="15" fill="#fff" stroke="#707070"/><rect x="217.5" y="650.5" width="24" height="15" fill="#fff" stroke="#707070"/><rect x="193" y="653" width="2" height="2" fill="#333"/><rect x="193" y="658" width="2" height="2" fill="#333"/><line x1="198" y1="654" x2="212" y2="654" stroke="#909090" stroke-width="1.2"/><line x1="198" y1="659" x2="212" y2="659" stroke="#909090" stroke-width="1.2"/><rect x="220" y="653" width="2" height="2" fill="#333"/><line x1="225" y1="654" x2="239" y2="654" stroke="#909090" stroke-width="1.2"/><line x1="225" y1="659" x2="239" y2="659" stroke="#909090" stroke-width="1.2"/><polygon points="206,660 222,660 222,655 229,662 222,668 206,668" fill="#b4b4b4"/><rect x="276.5" y="648.5" width="26" height="17" fill="#fff" stroke="#707070"/><rect x="279" y="652" width="2" height="2" fill="#333"/><rect x="279" y="657" width="2" height="2" fill="#333"/><line x1="284" y1="653" x2="299" y2="653" stroke="#909090" stroke-width="1.2"/><line x1="284" y1="658" x2="299" y2="658" stroke="#909090" stroke-width="1.2"/><polygon points="288,666 310,648 318,652 296,668" fill="#a8a8a8"/><line x1="292" y1="664" x2="312" y2="650" stroke="#d8d8d8" stroke-width="1"/><rect x="339.5" y="650.5" width="24" height="15" fill="#fff" stroke="#000"/><rect x="366.5" y="650.5" width="24" height="15" fill="#fff" stroke="#000"/><rect x="342" y="653" width="2" height="2" fill="#000"/><rect x="342" y="658" width="2" height="2" fill="#000"/><line x1="347" y1="654" x2="361" y2="654" stroke="#444" stroke-width="1.2"/><line x1="347" y1="659" x2="361" y2="659" stroke="#444" stroke-width="1.2"/><line x1="374" y1="654" x2="388" y2="654" stroke="#444" stroke-width="1.2"/><line x1="374" y1="659" x2="388" y2="659" stroke="#444" stroke-width="1.2"/><path d="M353,667 Q362,655 376,657" stroke="#e82828" stroke-width="5" fill="none"/><polygon points="373,649 381,656 373,664" fill="#e82828"/></svg>
<div style="left:411px;top:654px;width:130px;height:10px;background:#fff;border-top:1px solid #7a7a7a;border-left:1px solid #7a7a7a;border-right:1px solid #a0a0a0;"></div>
<div style="left:529px;top:656px;width:10px;height:8px;background:#e4e2dc;"></div>
<div class="t" style="left:416px;top:659.5px;font-size:12px;color:#000;font-weight:bold;">ovonoic</div>
<div style="left:945px;top:643px;width:72px;height:21px;border-top:2px solid #fff;border-left:2px solid #fff;border-right:1px solid #888;"></div>
<svg style="position:absolute;left:955px;top:648px" width="50" height="16"><defs><linearGradient id="fg" x1="0" x2="1"><stop offset="0" stop-color="#1a4ab0"/><stop offset="0.25" stop-color="#3a7ad0"/><stop offset="0.45" stop-color="#28388c"/><stop offset="0.65" stop-color="#3a7ad0"/><stop offset="0.9" stop-color="#203c98"/></linearGradient></defs><path d="M9,5 Q18,2 26,3 Q33,4 38,2 L45,16 L14,16 Z" fill="url(#fg)"/><path d="M8,6 L12,16" stroke="#909090" stroke-width="1.5"/></svg>
</body></html>
